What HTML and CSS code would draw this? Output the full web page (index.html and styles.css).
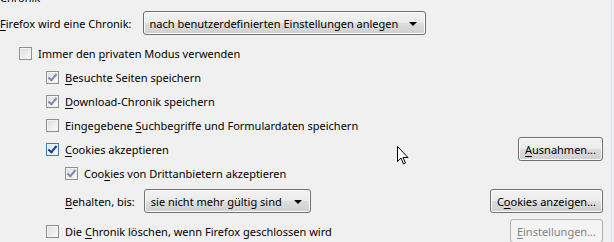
FILE: index.html
```html
<!DOCTYPE html>
<html lang="de">
<head>
    <meta charset="UTF-8">
    <title>Datenschutz</title>
    <link rel="stylesheet" href="styles.css">
</head>
<body>
    <div class="pane">
        <div class="caption"><span>Chronik</span></div>

        <div class="row first">
            <span class="label"><u>F</u>irefox wird eine Chronik:</span>
            <span class="select wide">nach benutzerdefinierten Einstellungen anlegen<i class="arrow"></i></span>
        </div>

        <div class="row lvl0">
            <span class="box"></span>
            <span>Immer den <u>p</u>rivaten Modus verwenden</span>
        </div>

        <div class="row lvl1">
            <span class="box checked dim"></span>
            <span><u>B</u>esuchte Seiten speichern</span>
        </div>

        <div class="row lvl1">
            <span class="box checked dim"></span>
            <span><u>D</u>ownload-Chronik speichern</span>
        </div>

        <div class="row lvl1">
            <span class="box"></span>
            <span>Eingegebene <u>S</u>uchbegriffe und Formulardaten speichern</span>
        </div>

        <div class="row lvl1">
            <span class="box checked hot"></span>
            <span><u>C</u>ookies akzeptieren</span>
            <span class="btn push-right"><u>A</u>usnahmen...</span>
        </div>

        <div class="row lvl2">
            <span class="box checked dim"></span>
            <span>Coo<u>k</u>ies von Drittanbietern akzeptieren</span>
        </div>

        <div class="row lvl2 keep">
            <span class="label"><u>B</u>ehalten, bis:</span>
            <span class="select narrow">sie nicht mehr gültig sind<i class="arrow"></i></span>
            <span class="btn push-right">C<u>o</u>okies anzeigen...</span>
        </div>

        <div class="row lvl1 last">
            <span class="box"></span>
            <span>Die <u>C</u>hronik löschen, wenn Firefox geschlossen wird</span>
            <span class="btn disabled push-right"><u>E</u>instellungen...</span>
        </div>

        <!-- mouse pointer -->
        <svg class="cursor" width="12" height="20" viewBox="0 0 12 20">
            <path d="M0.5 0.5 L0.5 15.5 L4 12 L6.5 18 L8.5 17 L6 11.5 L11 11.5 Z" fill="#fff" stroke="#000" stroke-width="1"/>
        </svg>
    </div>
</body>
</html>
```

FILE: styles.css
```css
body {
    margin: 0;
    background: #f0f0f0;
    font-family: "Noto Sans", "Open Sans", sans-serif;
    font-size: 11px;
    color: #000;
    overflow: hidden;
}

.pane {
    position: relative;
    width: 603px;
    height: 242px;
    overflow: hidden;
    border-right: 8px solid #f0f0f0;
    box-shadow: 1px 0 0 #dde3ea, 3px 0 0 #f0f0f0, 4px 0 0 #e4e9ef;
}

u {
    text-decoration: underline;
    text-underline-offset: 2px;
}

/* group caption, scrolled mostly out of view */
.caption {
    height: 6px;
    overflow: hidden;
}

.caption span {
    display: block;
    line-height: 16px;
    margin-top: -10px;
}

.row {
    display: flex;
    align-items: center;
    height: 24px;
}

.row.first {
    margin-top: 5px;
    margin-bottom: 6px;
}

.row.keep {
    margin-top: 4px;
}

.row.last {
    margin-top: 6px;
}

.lvl0 { padding-left: 19px; }
.lvl1 { padding-left: 46px; }
.lvl2 { padding-left: 65px; }

.label {
    margin-right: 11px;
}

.lvl2 .label {
    margin-right: 9px;
}

.push-right {
    margin-left: auto;
}

/* checkboxes */
.box {
    position: relative;
    width: 11px;
    height: 11px;
    border: 1px solid #8e8f8f;
    background: linear-gradient(135deg, #dcdcdc, #fbfbfb);
    box-shadow: inset 0 0 0 1px #f4f4f4;
    margin-right: 6px;
    flex-shrink: 0;
}

.box.hot {
    border-color: #3c7fb1;
    background: linear-gradient(135deg, #c9e7f8, #ffffff);
    box-shadow: inset 0 0 0 1px #eaf6fd;
}

.box.checked::after {
    content: "";
    position: absolute;
    left: 3px;
    top: 0;
    width: 3px;
    height: 7px;
    border-right: 2px solid #4a5f97;
    border-bottom: 2px solid #4a5f97;
    transform: rotate(40deg);
}

.box.dim.checked::after {
    border-color: #7a8bb4;
}

.box.hot.checked::after {
    border-color: #21359c;
}

/* dropdowns */
.select {
    position: relative;
    display: flex;
    align-items: center;
    height: 22px;
    border: 1px solid #707070;
    border-radius: 3px;
    background: linear-gradient(#f2f2f2 0%, #ebebeb 50%, #dddddd 51%, #cfcfcf 100%);
    box-shadow: inset 0 0 0 1px #fbfbfb;
    padding-left: 6px;
}

.select.wide {
    width: 275px;
}

.select.narrow {
    width: 159px;
}

.arrow {
    position: absolute;
    right: 8px;
    top: 10px;
    width: 0;
    height: 0;
    border-left: 4px solid transparent;
    border-right: 4px solid transparent;
    border-top: 4px solid #000;
}

/* buttons */
.btn {
    display: flex;
    align-items: center;
    justify-content: center;
    height: 22px;
    padding: 0 6px;
    border: 1px solid #707070;
    border-radius: 3px;
    background: linear-gradient(#f2f2f2 0%, #ebebeb 50%, #dddddd 51%, #cfcfcf 100%);
    box-shadow: inset 0 0 0 1px #fbfbfb;
}

.btn.disabled {
    color: #838383;
    border-color: #adb2b5;
    background: #f4f4f4;
    box-shadow: none;
}

.cursor {
    position: absolute;
    left: 397px;
    top: 146px;
}
```
